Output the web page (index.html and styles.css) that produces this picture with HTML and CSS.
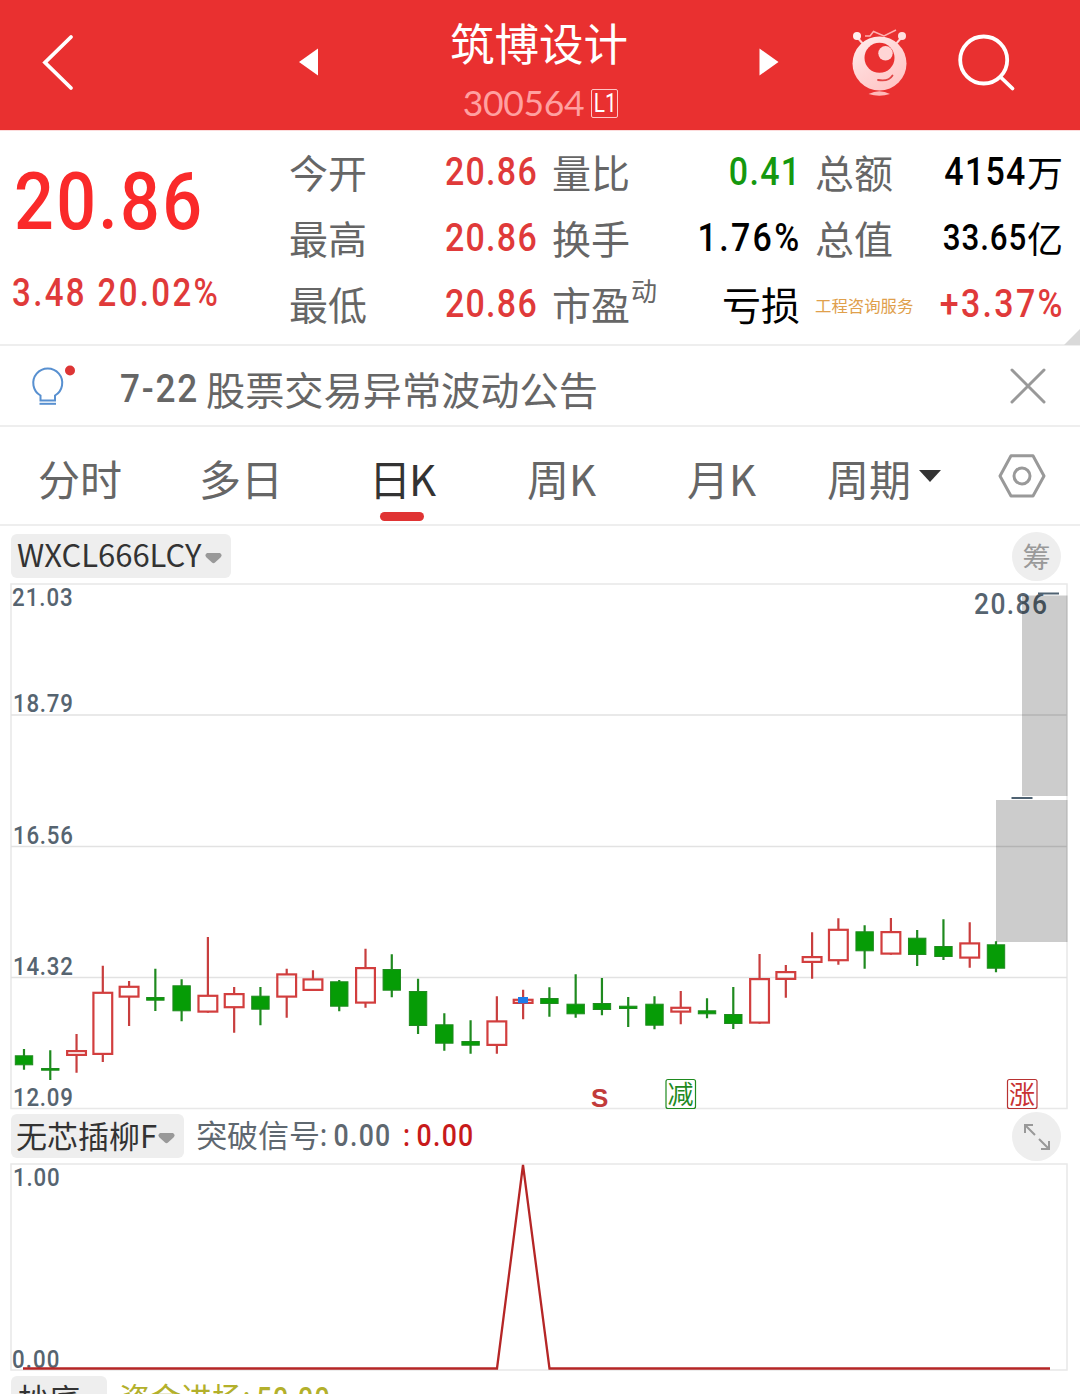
FILE: index.html
```html
<!DOCTYPE html>
<html lang="zh-CN">
<head>
<meta charset="utf-8">
<title>筑博设计 300564</title>
<link rel="stylesheet" href="styles.css">
</head>
<body>
<main class="app">
  <header class="topbar">
    <svg class="back" width="40" height="64" viewBox="0 0 40 64"><path d="M33 7 L7 32.500 L33 58"/></svg>
    <svg class="prev" width="20" height="28" viewBox="0 0 20 28"><path d="M19 .5 V27.500 L0 14 Z"/></svg>
    <div class="stock">
      <h1 class="stock-name">筑博设计</h1>
      <div class="stock-code"><span class="code">300564</span><span class="level"><span>L1</span></span></div>
    </div>
    <svg class="next" width="20" height="28" viewBox="0 0 20 28"><path d="M.500 .5 V27.500 L19.500 14 Z"/></svg>
    <svg class="robot" width="60" height="72" viewBox="850 26 60 72">
      <defs><linearGradient id="skin" x1="0" y1="0" x2=".7" y2="1"><stop offset="0" stop-color="#fff0f0"/><stop offset=".45" stop-color="#ffd9d9"/><stop offset="1" stop-color="#ffc6c6"/></linearGradient></defs>
      <path class="antenna" d="M857 37 L864 45 M902 37 L895 45"/>
      <path class="spark" d="M865 36 L870 36 L873.500 31.500 L884 36 L896 30"/>
      <circle cx="879.500" cy="63.500" r="27" fill="url(#skin)"/>
      <circle cx="857" cy="36" r="4" fill="#fff0f0"/><circle cx="902" cy="36" r="4" fill="#ffe0e0"/>
      <circle cx="879.500" cy="57.800" r="15" fill="#e93030"/>
      <circle cx="885.500" cy="53.300" r="7.200" fill="#ffd5d5"/>
      <path class="smile" d="M878 80 Q888.500 82 892.500 75.500"/>
      <path d="M868.500 94 Q879.500 88.500 890 94 Q879.500 97.500 868.500 94Z" fill="#ffb9b9"/>
    </svg>
    <svg class="search" width="60" height="60" viewBox="956 32 60 60"><circle cx="983.700" cy="60" r="23.500"/><path d="M1001 77.500 L1012.500 88.500"/></svg>
  </header>

  <section class="quote">
    <div class="price">
      <div class="last"><span>20.86</span></div>
      <div class="change"><span>3.48 20.02%</span></div>
    </div>
    <div class="stats">
      <div class="stat"><span class="label">今开</span><span class="num up">20.86</span></div>
      <div class="stat"><span class="label">量比</span><span class="num down">0.41</span></div>
      <div class="stat"><span class="label">总额</span><span class="num with-unit">4154</span><span class="unit">万</span></div>
      <div class="stat"><span class="label">最高</span><span class="num up">20.86</span></div>
      <div class="stat"><span class="label">换手</span><span class="num pct">1.76%</span></div>
      <div class="stat"><span class="label">总值</span><span class="num with-unit small">33.65</span><span class="unit">亿</span></div>
      <div class="stat"><span class="label">最低</span><span class="num up">20.86</span></div>
      <div class="stat"><span class="label">市盈<sup>动</sup></span><span class="word">亏损</span></div>
      <div class="stat"><span class="sector">工程咨询服务</span><span class="num pct up">+3.37%</span></div>
    </div>
    <svg class="corner" width="16" height="16" viewBox="0 0 16 16"><path d="M16 0 V16 H0Z"/></svg>
  </section>

  <section class="notice">
    <svg class="bulb" width="46" height="44" viewBox="31 363 46 44">
      <path class="glass" d="M40.500 399.500 V394.500 A14.500 14.500 0 1 1 55 394.500 V399.500 Z"/>
      <path class="base" d="M39.500 402.800 H56"/>
      <circle cx="70" cy="369.500" r="5"/>
    </svg>
    <p class="notice-text"><span class="date">7-22</span>股票交易异常波动公告</p>
    <svg class="close" width="36" height="36" viewBox="0 0 36 36"><path d="M2 2 L34 34 M34 2 L2 34"/></svg>
  </section>

  <nav class="tabs">
    <span class="tab">分时</span>
    <span class="tab">多日</span>
    <span class="tab active">日<b>K</b></span>
    <span class="tab">周<b>K</b></span>
    <span class="tab">月<b>K</b></span>
    <span class="tab">周期<svg class="drop" width="22" height="12" viewBox="0 0 22 12"><path d="M0 0 H22 L11 12Z"/></svg></span>
    <svg class="gear" width="48" height="44" viewBox="0 0 48 44"><path d="M13 1.700 H35 L46 22 L35 42 H13 L2 22 Z"/><circle cx="24" cy="22" r="8"/></svg>
  </nav>

  <section class="toolbar main-bar">
    <span class="chip"><span>WXCL666LCY</span><svg width="17" height="11" viewBox="0 0 17 11"><path d="M2 0 H15 Q18 2 15.500 4.500 L10 9.500 Q8.500 11 7 9.500 L1.500 4.500 Q-1 2 2 0Z"/></svg></span>
    <span class="round">筹</span>
  </section>
  <svg class="chart" width="1080" height="529" viewBox="0 582 1080 529">
    <path class="frame" d="M11 584 H1067 V1108.500 H11 Z"/>
    <path class="grid" d="M11 715 H1067 M11 846.500 H1067 M11 977.500 H1067"/>
    <g id="candles"></g>
    <rect x="518" y="997" width="10" height="6.300" fill="#1d7bea"/>
    <g class="axis">
      <text x="12" y="606" textLength="69">21.03</text>
      <text x="13" y="712" textLength="68">18.79</text>
      <text x="13" y="844" textLength="68">16.56</text>
      <text x="13" y="975" textLength="68">14.32</text>
      <text x="13" y="1106" textLength="68">12.09</text>
      <text class="peak" x="974" y="613.700" textLength="83">20.86</text>
    </g>
    <path class="zone" d="M1022 595.500 H1067.500 V796 H1022Z M996 800 H1067.500 V942 H996Z"/>
    <path class="dash" d="M1038 593.500 H1059 M1011.500 798 H1032.500"/>
    <text class="sell" x="591" y="1107">S</text>
    <g class="mark green"><rect x="666" y="1079.500" width="29.500" height="29" rx="2"/><text x="667.500" y="1103.500">减</text></g>
    <g class="mark red"><rect x="1007.500" y="1079.500" width="29.500" height="29" rx="2"/><text x="1009" y="1103.500">涨</text></g>
  </svg>

  <section class="toolbar sub-bar">
    <span class="chip">无芯插柳<span>F</span><svg width="17" height="11" viewBox="0 0 17 11"><path d="M2 0 H15 Q18 2 15.500 4.500 L10 9.500 Q8.500 11 7 9.500 L1.500 4.500 Q-1 2 2 0Z"/></svg></span>
    <span class="signal">突破信号<span class="sig-num"><i>:</i>0.00</span></span>
    <span class="signal hot"><span class="sig-num"><i>:</i>0.00</span></span>
    <span class="round"><svg width="28" height="28" viewBox="0 0 28 28"><path class="line" d="M3 3 L12 12 M16 16 L25 25 M2 10 V2 H10 M26 18 V26 H18"/></svg></span>
  </section>
  <svg class="chart" width="1080" height="210" viewBox="0 1162 1080 210">
    <path class="frame" d="M11 1164 H1067 V1370 H11 Z"/>
    <g class="axis">
      <text x="13" y="1186.500" textLength="53">1.00</text>
      <text x="12" y="1368" textLength="54">0.00</text>
    </g>
    <path class="signal-line" d="M23 1368.500 H497 L523 1165 L549.500 1368.500 H1050"/>
  </svg>

  <section class="toolbar last-bar">
    <span class="chip">抄底</span>
    <span class="signal fund">资金进场<span class="sig-num"><i>:</i>50.00</span></span>
  </section>
</main>
<script src="chart.js"></script>
</body>
</html>
```
FILE: styles.css
```css
* { box-sizing: border-box; margin: 0; padding: 0; }
body { background: #fff; font-family: "Noto Sans CJK SC", sans-serif; color: #666; }
svg { display: block; flex: none; }
.app { width: 1080px; height: 1394px; overflow: hidden; display: flex; flex-direction: column; }

.topbar { height: 130px; flex: none; background: #e93030; display: flex; align-items: flex-start; }
.back { margin: 30px 0 0 38px; fill: none; stroke: #fff; stroke-width: 3.800; stroke-linecap: round; }
.prev { margin: 48px 0 0 221px; fill: #fff; }
.stock { width: 440px; display: flex; flex-direction: column; align-items: center; }
.stock-name { margin-top: 12px; height: 60px; line-height: 60px; font-size: 44.500px; font-weight: 400; color: #fff; white-space: nowrap; }
.stock-code { display: flex; align-items: center; gap: 7px; height: 30px; margin-top: 16px; margin-left: 3px; }
.code { font: 400 35.500px/30px Lato, sans-serif; color: #ffa0a0; letter-spacing: -.3px; }
.level { width: 27px; height: 29px; border: 1px solid #ffc5c5; border-radius: 2px; font: 400 26px/27px Roboto, sans-serif; display: flex; justify-content: center; color: #fff; }
.level span { transform: scaleX(.8); }
.next { margin: 48px 0 0 0; fill: #fff; }
.robot { margin: 26px 0 0 71px; }
.antenna { fill: none; stroke: #ffd5d5; stroke-width: 2; }
.spark { fill: none; stroke: #ffb0b0; stroke-width: 1.500; }
.smile { fill: none; stroke: #e04545; stroke-width: 1.800; stroke-linecap: round; }
.search { margin: 32px 0 0 46px; fill: none; stroke: #fff; stroke-width: 3.800; stroke-linecap: round; }

.quote { position: relative; height: 216px; flex: none; display: flex; border-top: 1px solid #fcdcdc; border-bottom: 2px solid #eee; }
.price { width: 289px; padding-left: 12px; font-family: Roboto, sans-serif; font-weight: 500; white-space: nowrap; }
.price span { display: inline-block; transform: scaleX(.87); transform-origin: left; }
.last { margin: 26px 0 0 2px; height: 90px; font-size: 80.500px; line-height: 90px; color: #fa2a2a; letter-spacing: 2.700px; }
.change { margin-top: 26px; height: 40px; font-size: 38px; line-height: 40px; color: #e03a3a; letter-spacing: 2.700px; }
.stats { display: grid; grid-template-columns: repeat(3, 248px); grid-template-rows: repeat(3, 66px); column-gap: 15px; padding-top: 7px; }
.stat { display: flex; justify-content: space-between; align-items: center; line-height: 66px; white-space: nowrap; }
.label { font-size: 39px; color: #666; }
.label sup { font-size: 26px; line-height: 1; vertical-align: 19px; margin-left: 1px; }
.num { font-family: Roboto, sans-serif; font-size: 39px; font-weight: 500; color: #000; letter-spacing: 1.500px; margin: 2px -1px 0 auto; transform: scaleX(.87); transform-origin: right; }
.num.pct { letter-spacing: 2.700px; margin-right: -2px; }
.num.small { font-size: 36px; letter-spacing: 1.100px; }
.num.with-unit { margin-right: 0; }
.unit { font-size: 36px; color: #000; }
.num.up { color: #e03a3a; }
.num.down { color: #15980f; }
.word { font-size: 39px; color: #000; }
.sector { font-size: 16.400px; color: #e0a04c; margin-top: 3px; }
.corner { position: absolute; right: 0; bottom: -1px; fill: #d9d9d9; }

.notice { height: 81px; flex: none; display: flex; align-items: center; border-bottom: 2px solid #eee; }
.bulb { margin-left: 31px; }
.glass { fill: none; stroke: #5890d0; stroke-width: 2; }
.base { stroke: #5890d0; stroke-width: 2; }
.bulb circle { fill: #dd3535; }
.notice-text { display: flex; margin-left: 43px; padding-top: 5px; font-size: 39.200px; line-height: 74px; flex: 1; white-space: nowrap; }
.date { width: 86px; padding-top: 1px; font-family: Roboto, sans-serif; font-weight: 500; font-size: 39px; letter-spacing: 2px; transform: scaleX(.9); transform-origin: left; }
.close { margin-right: 34px; fill: none; stroke: #999; stroke-width: 3; stroke-linecap: round; }

.tabs { height: 99px; flex: none; display: grid; grid-template-columns: 161px 170px 158px 160px 140px 171px 1fr; padding-left: 38px; border-bottom: 2px solid #eee; font-size: 42px; line-height: 101px; }
.tab { position: relative; display: flex; align-items: center; white-space: nowrap; }
.tab b { font-weight: 400; }
.tab.active { color: #333; }
.tab.active b { margin-left: -2px; }
.tab.active::after { content: ""; position: absolute; left: 11px; bottom: 7px; width: 44px; height: 9px; border-radius: 5px; background: #e03333; }
.drop { fill: #333; margin: -4px 0 0 8px; }
.gear { margin-top: 27px; fill: none; stroke: #999; stroke-width: 3; stroke-linejoin: round; }

.toolbar { display: flex; flex: none; padding: 0 19px 0 11px; font-size: 31px; }
.main-bar { height: 56px; padding-top: 6px; justify-content: space-between; }
.sub-bar { height: 51px; padding-top: 1px; }
.last-bar { height: 22px; padding-top: 4px; overflow: hidden; }
.chip { height: 44px; margin-top: 2px; border-radius: 6px; background: #eee; color: #333; padding: 0 9px 4px 6px; display: flex; align-items: center; line-height: 40px; white-space: nowrap; }
.chip svg { fill: #999; margin: 8px 0 0 2px; }
.main-bar .chip svg { margin-left: 3px; }
.sub-bar .chip { padding-left: 5px; padding-bottom: 3px; }
.sub-bar .chip svg { margin-left: 1px; }
.round { width: 49px; height: 49px; border-radius: 50%; background: #eee; color: #999; display: flex; align-items: center; justify-content: center; font-size: 28px; line-height: 49px; }
.sub-bar .round { margin-left: auto; }
.line { fill: none; stroke: #999; stroke-width: 2; }
.signal { display: flex; height: 44px; line-height: 42px; color: #5f6870; margin-left: 12px; white-space: nowrap; }
.sub-bar .signal { padding-top: 1px; }
.sig-num { padding-top: 2px; font-family: Roboto, sans-serif; font-weight: 500; font-size: 31px; letter-spacing: 1.500px; transform: scaleX(.86); transform-origin: left; }
.sig-num i { font-style: normal; margin-right: 6px; }
.signal.hot { color: #c81a1a; margin-left: 0; }
.last-bar .chip, .last-bar .signal { margin-top: 0; }
.last-bar .chip { width: 96px; padding: 0 0 0 7px; }
.fund { color: #b3b02b; }

.frame { fill: none; stroke: #e8e8e8; stroke-width: 1.500; }
.grid { stroke: #e2e2e2; stroke-width: 1.300; }
.axis text { font-family: Roboto, sans-serif; font-weight: 500; font-size: 25.300px; fill: #566470; transform: scaleX(.88); transform-box: fill-box; transform-origin: left; }
.axis .peak { font-size: 30px; }
.zone { fill: rgba(0, 0, 0, .2); }
.dash { stroke: #4f6272; stroke-width: 2; }
.candle-up { fill: none; stroke: #d23e3e; stroke-width: 2.200; }
.candle-down { fill: #069c06; stroke: #1f8a1f; stroke-width: 1; }
.wick-up { stroke: #c83e3e; stroke-width: 2.200; }
.wick-down { stroke: #1f8a1f; stroke-width: 2.200; }
.sell { font: 700 26px "Liberation Sans", sans-serif; fill: #c23b3b; }
.mark rect { fill: none; stroke-width: 1.200; }
.mark text { font-size: 26px; }
.green rect { stroke: #1f8a1f; }
.green text { fill: #1f8a1f; }
.red rect { stroke: #b83232; }
.red text { fill: #c83232; }
.signal-line { fill: none; stroke: #b52626; stroke-width: 2.300; }
```
FILE: chart.js
```js
// [direction, high, body top, body bottom, low]; direction 1 = rise, 0 = fall
const candles = [
  [0,1049,1055.3,1065.3,1069.7],[0,1050.3,1068,1070.7,1080],[1,1034,1050,1056,1072.7],
  [1,965.7,991.7,1055,1062],[1,981,985.7,997.7,1026],[0,968.7,997,1000.7,1011],
  [0,979.3,985.3,1011.3,1021.3],[1,937,994.7,1012.7,1012.7],[1,987,993,1008.3,1032.7],
  [0,987,995.7,1009.7,1025.3],[1,968.7,973.3,997.7,1017.7],[1,970.3,978.3,991,991],
  [0,980,981.3,1006.7,1011.3],[1,948.7,967,1003.7,1007.7],[0,954.3,969,990.7,997.3],
  [0,978.7,991,1026,1034],[0,1013.3,1024.3,1043.7,1050.7],[0,1020.3,1041,1045.7,1053.7],
  [1,996.3,1020.3,1046,1053.7],[1,989.7,998.7,1004,1019.3],[0,987.3,998,1004,1016.7],
  [0,974.3,1003.7,1014.3,1017.7],[0,978,1003,1010,1015.3],[0,997,1005.7,1009,1027],
  [0,996.3,1003.7,1025.7,1029.3],[1,991,1006.7,1012.7,1024.3],[0,998.3,1010.3,1014.3,1018.3],
  [0,987,1014,1024,1029],[1,954,978,1023.7,1023.7],[1,965,971,980,997.7],
  [1,932.3,956,963,978.7],[1,918.3,928.7,961.3,964.7],[0,925.3,931.3,951.3,968.7],
  [1,918,931,954.7,954.7],[0,930,937.7,955,966],[0,919.3,946,957,960],
  [1,922.3,942.3,958.7,967.7],[0,941.3,944.3,968.7,972.3]
];
const ns = "http://www.w3.org/2000/svg";
const layer = document.getElementById("candles");
function add(tag, attrs) {
  const el = document.createElementNS(ns, tag);
  for (const k in attrs) el.setAttribute(k, attrs[k]);
  layer.appendChild(el);
}
candles.forEach(([up, high, top, bottom, low], i) => {
  const x = 24 + 26.27 * i;
  add("path", { class: up ? "wick-up" : "wick-down", d: `M${x} ${high}V${top + 1}M${x} ${bottom - 1}V${low}` });
  const half = up ? 9.4 : 8.7, inset = up ? 1.1 : 0.5;
  add("rect", { class: up ? "candle-up" : "candle-down", x: x - half, y: top + inset, width: half * 2, height: bottom - top - inset * 2 });
});
```
